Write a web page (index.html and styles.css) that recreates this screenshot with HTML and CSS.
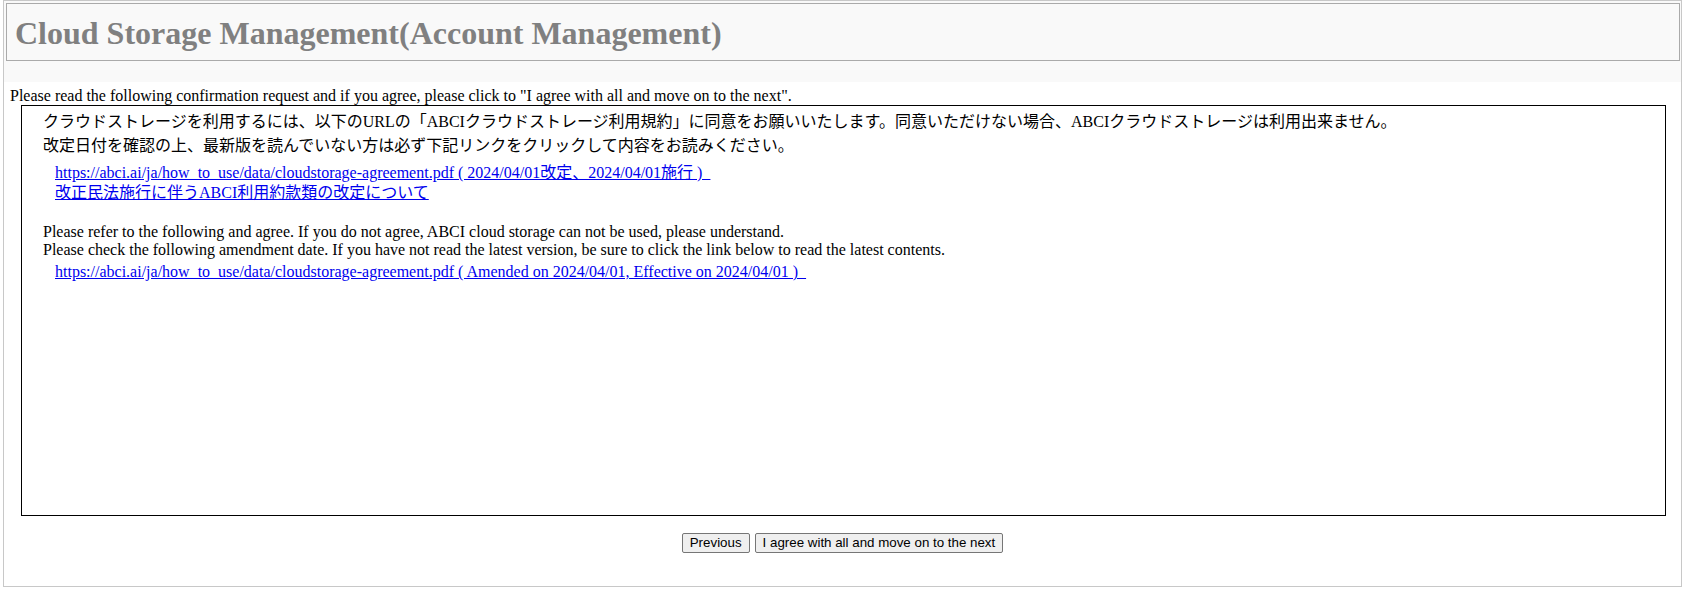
FILE: index.html
```html
<!DOCTYPE html>
<html lang="ja">
<head>
<meta charset="utf-8">
<title>Cloud Storage Management(Account Management)</title>
<link rel="stylesheet" href="styles.css">
</head>
<body>
<div class="frame">
  <div class="header">
    <h1 class="title">Cloud Storage Management(Account Management)</h1>
  </div>
  <p class="intro">Please read the following confirmation request and if you agree, please click to "I agree with all and move on to the next".</p>
  <div class="agreement">
    <div class="notice-jp">
      <p class="jp-line">クラウドストレージを利用するには、以下のURLの「ABCIクラウドストレージ利用規約」に同意をお願いいたします。同意いただけない場合、ABCIクラウドストレージは利用出来ません。</p>
      <p class="jp-line">改定日付を確認の上、最新版を読んでいない方は必ず下記リンクをクリックして内容をお読みください。</p>
    </div>
    <ul class="links links-jp">
      <li class="link-item"><a href="#">https://abci.ai/ja/how_to_use/data/cloudstorage-agreement.pdf ( 2024/04/01改定、2024/04/01施行 )&nbsp;&nbsp;</a></li>
      <li class="link-item"><a href="#">改正民法施行に伴うABCI利用約款類の改定について</a></li>
    </ul>
    <div class="notice-en">
      <p class="en-line">Please refer to the following and agree. If you do not agree, ABCI cloud storage can not be used, please understand.</p>
      <p class="en-line">Please check the following amendment date. If you have not read the latest version, be sure to click the link below to read the latest contents.</p>
    </div>
    <ul class="links links-en">
      <li class="link-item"><a href="#">https://abci.ai/ja/how_to_use/data/cloudstorage-agreement.pdf ( Amended on 2024/04/01, Effective on 2024/04/01 )&nbsp;&nbsp;</a></li>
    </ul>
  </div>
  <div class="actions">
    <button class="btn" type="button">Previous</button>
    <button class="btn" type="button">I agree with all and move on to the next</button>
  </div>
</div>
</body>
</html>
```
FILE: styles.css
```css
html, body {
  margin: 0;
  padding: 0;
  background: #ffffff;
}

body {
  font-family: "Liberation Serif", "Noto Sans CJK JP", serif;
  color: #000000;
}

.frame {
  margin: 0 1px 0 3px;
  border: 1px solid #c8c8c8;
  background: #ffffff;
}

.header {
  background: #f9f9f9;
  padding: 2px 1px 21px 2px;
}

.title {
  margin: 0;
  padding: 11px 8px 8px 8px;
  height: 37px;
  border: 1px solid #aaaaaa;
  background: #f9f9f9;
  color: #808080;
  font-family: "Liberation Serif", serif;
  font-weight: bold;
  font-size: 32px;
  line-height: 37px;
}

.intro {
  margin: 5px 0 0 6px;
  font-size: 16px;
  line-height: 18px;
}

.agreement {
  margin: 0 15px 0 17px;
  height: 409px;
  border: 1px solid #000000;
  background: #ffffff;
}

.notice-jp {
  padding: 4px 0 0 21px;
}

.jp-line {
  margin: 0;
  font-size: 16px;
  line-height: 24px;
  white-space: nowrap;
}

.links {
  list-style: none;
  margin: 0;
  padding: 0 0 0 33px;
}

.links-jp {
  margin-top: 5px;
}

.links-en {
  margin-top: 3px;
}

.links a {
  color: #0000ee;
  text-decoration: underline;
}

.link-item {
  font-size: 16px;
  line-height: 20px;
  white-space: nowrap;
}

.notice-en {
  padding: 20px 0 0 21px;
}

.en-line {
  margin: 0;
  font-size: 16px;
  line-height: 18px;
  white-space: nowrap;
}

.actions {
  display: flex;
  justify-content: center;
  gap: 5px;
  padding: 17px 0 33px 0;
}

.btn {
  box-sizing: border-box;
  height: 20px;
  margin: 0;
  padding: 0 7px;
  border: 1px solid #767676;
  border-radius: 2px;
  background: #efefef;
  color: #000000;
  font-family: "Liberation Sans", Arial, sans-serif;
  font-size: 13.333px;
  line-height: 18px;
}
```
